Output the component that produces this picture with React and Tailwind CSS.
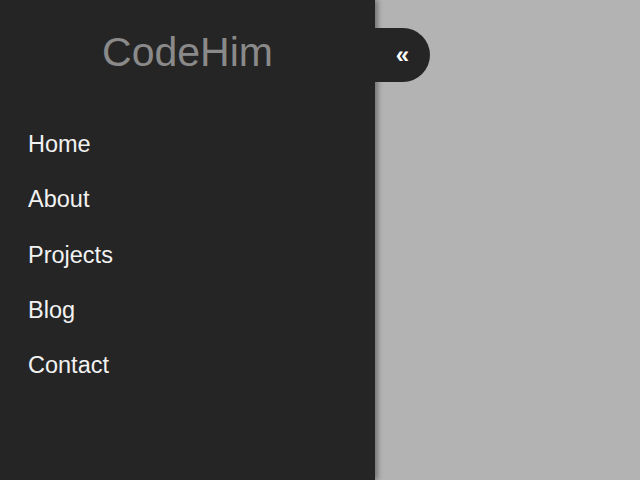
import { useState } from 'react'

const LINKS = ['Home', 'About', 'Projects', 'Blog', 'Contact']

// ─── Sidebar ───────────────────────────────────────────────────────────────
export default function App() {
  const [open, setOpen] = useState(true)

  return (
    <div className="flex h-[480px] w-[640px] overflow-hidden bg-[#b3b3b3] font-['Liberation_Sans',Arial,sans-serif]">
      <aside className="relative h-full w-[375px] shrink-0 bg-[#252525] shadow-[3px_0_5px_rgba(0,0,0,0.35)]">
        <h1 className="pt-[28px] text-center text-[41px] leading-[48px] text-[#8a8a8a]">CodeHim</h1>

        <ul className="mt-[41px] pl-[28px]">
          {LINKS.map(l => (
            <li key={l} className="text-[23.5px] leading-[55.25px] text-[#f2f2f2]">
              <a href="#">{l}</a>
            </li>
          ))}
        </ul>

        {/* Toggle tab */}
        <button onClick={() => setOpen(o => !o)}
          className="absolute left-full top-[28px] flex h-[54px] w-[55px] items-center justify-center rounded-r-full bg-[#252525] text-[24px] font-bold leading-none text-white">
          {open ? '«' : '»'}
        </button>
      </aside>
    </div>
  )
}
